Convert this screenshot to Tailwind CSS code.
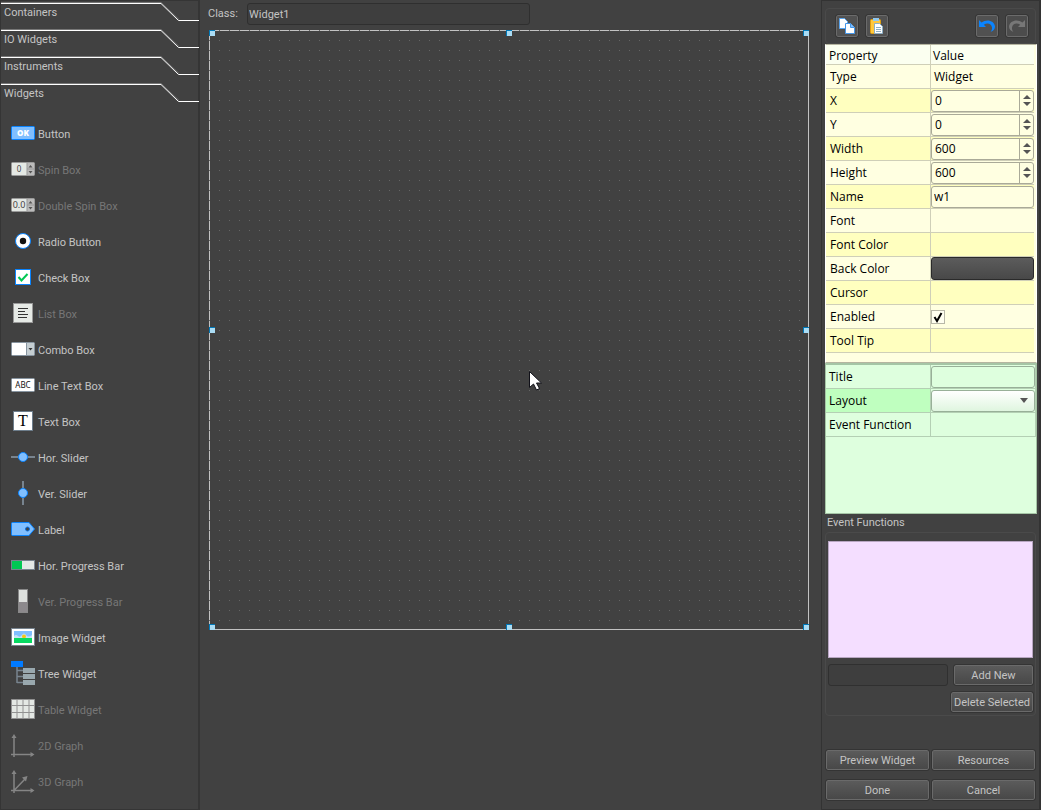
<!DOCTYPE html>
<html lang="en">
<head>
<meta charset="utf-8">
<title>Widget Designer</title>
<script src="https://cdn.jsdelivr.net/npm/@tailwindcss/browser@4"></script>
</head>
<body class="flex min-h-screen bg-[#414141] font-['Roboto',sans-serif] text-[11px] leading-4 text-[#c4c4c4]">

<aside class="w-[200px] shrink-0 border border-[#353535] border-r-2">
  <nav class="-mt-px -ml-px" aria-label="Widget groups">
    <button class="relative block h-[27px] w-full pl-1 pb-0.5 text-left"><svg class="absolute left-0 top-0" width="199" height="27" fill="none"><path d="M1 2.500H161L179 19.500" stroke="#777"/><path d="M1 3.500H161L178.500 20.500H199" stroke="#fff"/></svg>Containers</button>
    <button class="relative block h-[27px] w-full pl-1 pb-0.5 text-left"><svg class="absolute left-0 top-0" width="199" height="27" fill="none"><path d="M1 2.500H161L179 19.500" stroke="#777"/><path d="M1 3.500H161L178.500 20.500H199" stroke="#fff"/></svg>IO Widgets</button>
    <button class="relative block h-[27px] w-full pl-1 pb-0.5 text-left"><svg class="absolute left-0 top-0" width="199" height="27" fill="none"><path d="M1 2.500H161L179 19.500" stroke="#777"/><path d="M1 3.500H161L178.500 20.500H199" stroke="#fff"/></svg>Instruments</button>
    <button class="relative block h-[27px] w-full pl-1 pb-0.5 text-left"><svg class="absolute left-0 top-0" width="199" height="27" fill="none"><path d="M1 2.500H161L179 19.500" stroke="#777"/><path d="M1 3.500H161L178.500 20.500H199" stroke="#fff"/></svg>Widgets</button>
  </nav>
  <ul class="pt-[7px] pl-[10px] [&_span]:pt-1">
    <li class="flex h-9 items-center gap-[3px]"><svg width="24" height="24"><rect x=".5" y="5.500" width="23" height="13" rx="1" fill="#80bfff" stroke="#0a84ff"/><text x="12" y="15" text-anchor="middle" font-family="Open Sans" font-size="8" font-weight="800" fill="#fff">OK</text></svg><span>Button</span></li>
    <li class="flex h-9 items-center gap-[3px] text-[#777]"><svg width="24" height="24"><rect x=".5" y="5.500" width="23" height="13" rx="1" fill="#e4e8e4" stroke="#999"/><rect x="16" y="6" width="7" height="12" fill="#bbb"/><path d="M16 6v12M16 12h7" stroke="#999"/><path d="M17.500 10.500l2-2.500 2 2.500zM17.500 14l2 2.500 2-2.500z" fill="#555"/><text x="8" y="15" text-anchor="middle" font-family="Noto Sans" font-size="8" fill="#444">0</text></svg><span>Spin Box</span></li>
    <li class="flex h-9 items-center gap-[3px] text-[#777]"><svg width="24" height="24"><rect x=".5" y="5.500" width="23" height="13" rx="1" fill="#e4e8e4" stroke="#999"/><text x="8" y="15" text-anchor="middle" font-family="Noto Sans" font-size="9" fill="#444">0.0</text><rect x="16" y="6" width="7" height="12" fill="#bbb"/><path d="M16 6v12M16 12h7" stroke="#999"/><path d="M17.500 10.500l2-2.500 2 2.500zM17.500 14l2 2.500 2-2.500z" fill="#555"/></svg><span>Double Spin Box</span></li>
    <li class="flex h-9 items-center gap-[3px]"><svg width="24" height="24"><circle cx="12" cy="12" r="7.500" fill="#fff" stroke="#0a84ff"/><circle cx="12" cy="12" r="3.200" fill="#111"/></svg><span>Radio Button</span></li>
    <li class="flex h-9 items-center gap-[3px]"><svg width="24" height="24"><rect x="4.500" y="4.500" width="15" height="15" fill="#fff" stroke="#0a84ff"/><path d="M7.500 12l3 3.500 6-6.500" fill="none" stroke="#00c853" stroke-width="2"/></svg><span>Check Box</span></li>
    <li class="flex h-9 items-center gap-[3px] text-[#777]"><svg width="24" height="24"><rect x="2.500" y="2.500" width="19" height="19" fill="#e6eae6" stroke="#999"/><path d="M7 7.500h10M7 10.500h7M7 13.500h10M7 16.500h9" stroke="#333"/></svg><span>List Box</span></li>
    <li class="flex h-9 items-center gap-[3px]"><svg width="24" height="24"><rect x=".5" y="5.500" width="23" height="13" rx="1" fill="#fff" stroke="#8794a0"/><path d="M16 6h7v12h-7z" fill="#c5ced2"/><path d="M15.500 6v12" stroke="#8794a0"/><path d="M17.500 11h4l-2 2.500z" fill="#333"/></svg><span>Combo Box</span></li>
    <li class="flex h-9 items-center gap-[3px]"><svg width="24" height="24"><rect x=".5" y="5.500" width="23" height="13" rx="1" fill="#fff" stroke="#8794a0"/><text x="12" y="15" text-anchor="middle" font-family="Noto Sans" font-size="8" fill="#111">ABC</text></svg><span>Line Text Box</span></li>
    <li class="flex h-9 items-center gap-[3px]"><svg width="24" height="24"><rect x="2.500" y="2.500" width="19" height="19" fill="#fff" stroke="#6d7d8b"/><text x="12" y="17" text-anchor="middle" font-family="Liberation Serif" font-size="16" fill="#000">T</text></svg><span>Text Box</span></li>
    <li class="flex h-9 items-center gap-[3px]"><svg width="24" height="24"><path d="M0 12h24" stroke="#78848f" stroke-width="2"/><circle cx="12" cy="12" r="4.500" fill="#80bfff" stroke="#0a84ff"/></svg><span>Hor. Slider</span></li>
    <li class="flex h-9 items-center gap-[3px]"><svg width="24" height="24"><path d="M12 0v24" stroke="#78848f" stroke-width="2"/><circle cx="12" cy="12" r="4.500" fill="#80bfff" stroke="#0a84ff"/></svg><span>Ver. Slider</span></li>
    <li class="flex h-9 items-center gap-[3px]"><svg width="24" height="24"><path d="M1.500 5.500H18L23.500 12 18 18.500H1.500Q.5 18.500 .5 17.500V6.500Q.5 5.500 1.500 5.500z" fill="#80bfff" stroke="#0a84ff"/><circle cx="16.500" cy="12" r="2" fill="#414141" stroke="#0a70e0"/></svg><span>Label</span></li>
    <li class="flex h-9 items-center gap-[3px]"><svg width="24" height="24"><rect x=".5" y="7.500" width="23" height="9" fill="#e2e8e6" stroke="#78848f"/><path d="M1 8h10v8H1z" fill="#00c853"/></svg><span>Hor. Progress Bar</span></li>
    <li class="flex h-9 items-center gap-[3px] text-[#777]"><svg width="24" height="24"><rect x="7.500" y=".5" width="9" height="23" fill="#dde0dd" stroke="#888"/><path d="M8 13h8v10H8z" fill="#8c898c"/></svg><span>Ver. Progress Bar</span></li>
    <li class="flex h-9 items-center gap-[3px]"><svg width="24" height="24"><rect x=".5" y="3.500" width="23" height="17" fill="#fff" stroke="#78848f"/><path d="M3 6h18v7H3z" fill="#80bfff"/><path d="M3 11q2-2 4 0t4-1 4 0 6 0v3H3z" fill="#c5e3f4"/><circle cx="13" cy="11.500" r="2" fill="#f5c518"/><path d="M3 13h18v5H3z" fill="#08da62"/></svg><span>Image Widget</span></li>
    <li class="flex h-9 items-center gap-[3px]"><svg width="24" height="24"><path d="M0 0h12v6H0z" fill="#007aff"/><path d="M6 6v16M6 9.500h6M6 15.500h6M6 21.500h6" stroke="#78848f" stroke-width="1.500"/><path d="M12 7h12v5H12zM12 13h12v5H12zM12 19h12v5H12z" fill="#99a8ae"/></svg><span>Tree Widget</span></li>
    <li class="flex h-9 items-center gap-[3px] text-[#777]"><svg width="24" height="24"><path d="M.5 2.500h23v19H.5z" fill="#e4e8e4" stroke="#929292"/><path d="M6 2v20M12 2v20M18 2v20M0 8.500h24M0 15.500h24" stroke="#929292"/></svg><span>Table Widget</span></li>
    <li class="flex h-9 items-center gap-[3px] text-[#777]"><svg width="24" height="24" fill="#858585" stroke="#858585"><path d="M3 24V3M0 21.500h22" stroke-width="1.500"/><path d="M.5 5L3 1l2.500 4zM19.500 19l4 2.500-4 2.500z" stroke="none"/></svg><span>2D Graph</span></li>
    <li class="flex h-9 items-center gap-[3px] text-[#777]"><svg width="24" height="24" fill="#858585" stroke="#858585"><path d="M3 24V3M0 21.500h22M3 21.500L14.500 9.500" stroke-width="1.500"/><path d="M.5 5L3 1l2.500 4zM19.500 19l4 2.500-4 2.500zM11 8.500l5.500-1.500-1.500 5.500z" stroke="none"/></svg><span>3D Graph</span></li>
  </ul>
</aside>

<main class="min-w-0 flex-1 pl-2 pt-[3px]">
  <div class="flex items-center">
    <label for="cls" class="w-[39px]">Class:</label>
    <input id="cls" value="Widget1" class="h-[22px] w-[283px] rounded-[3px] border border-[#2f2f2f] bg-[#3e3e3e] px-px outline-none">
  </div>
  <div class="mt-[5px] ml-px">
    <svg class="block" width="600" height="600" shape-rendering="crispEdges">
      <defs><pattern id="dots" width="10" height="10" patternUnits="userSpaceOnUse"><rect width="1" height="1" fill="#666"/></pattern></defs>
      <path d="M0 .5H600M.5 0V600M599.500 0V600M0 599.500H600" stroke="#c2c2c2"/>
      <rect width="599" height="599" fill="url(#dots)"/>
      <g fill="#0078b8"><path d="M0 0h6v6H0zM297 0h6v6h-6zM594 0h6v6h-6zM0 297h6v6H0zM594 297h6v6h-6zM0 594h6v6H0zM297 594h6v6h-6zM594 594h6v6h-6z"/></g>
      <g fill="#aadcf4"><path d="M1 1h5v5H1zM298 1h5v5h-5zM595 1h5v5h-5zM1 298h5v5H1zM595 298h5v5h-5zM1 595h5v5H1zM298 595h5v5h-5zM595 595h5v5h-5z"/></g>
      <path d="M320.500 341.500v16l4-3.500 3 6 3-1.500-3-5.500h5z" fill="#fff" stroke="#101018" shape-rendering="auto"/>
    </svg>
  </div>
</main>

<aside class="flex w-[220px] shrink-0 flex-col border border-[#333] border-r-2 px-[3px] pt-[7px]">
  <div class="flex h-9 items-center rounded-sm border border-[#4a4a4a] pl-[10px] pr-[7px]">
    <button aria-label="Copy" class="flex size-[22px] items-center justify-center rounded-[2px] border border-[#6b6b6b] bg-[#515151] outline outline-[#363636]"><svg width="18" height="18"><path d="M1.500 1.500h5l3 3v7h-8z" fill="#fff" stroke="#5aa5ee"/><path d="M7.500 6.500h5l4 4v6h-9z" fill="#fff" stroke="#4596e8"/><path d="M12.500 6.500v4h4" fill="#80bfff" stroke="#4596e8"/></svg></button>
    <button aria-label="Paste" class="ml-2 flex size-[22px] items-center justify-center rounded-[2px] border border-[#6b6b6b] bg-[#515151] outline outline-[#363636]"><svg width="18" height="18"><rect x="2.500" y="2.500" width="10" height="14" rx="1" fill="#ffc83d" stroke="#dc9d12"/><rect x="5" y="1" width="6" height="3" fill="#90c8ef"/><path d="M6.500 6.500h5l3 3v7h-8z" fill="#fff" stroke="#8dafc5"/><path d="M8 10.500h5M8 12.500h5M8 14.500h5" stroke="#8dafc5"/></svg></button>
    <span class="flex-1"></span>
    <button aria-label="Undo" class="flex size-[22px] items-center justify-center rounded-[2px] border border-[#6b6b6b] bg-[#515151] outline outline-[#363636]"><svg width="18" height="18"><path d="M1 3v7h7L5.800 7.800C9 5.500 13.500 6.500 14 10.500c.2 1.800-.4 3.300-1.500 4.500 3-1 4.500-3 4.500-5.500C16.500 3.500 8.500 1.500 3.500 5.500z" fill="#0a84ff"/></svg></button>
    <button aria-label="Redo" disabled class="ml-2 flex size-[22px] items-center justify-center rounded-[2px] border border-[#6b6b6b] bg-[#4c4c4c] outline outline-[#363636]"><svg width="18" height="18"><path d="M17 3v7h-7l2.200-2.200C9 5.500 4.500 6.500 4 10.500c-.2 1.800.4 3.300 1.500 4.500-3-1-4.500-3-4.500-5.500C1.500 3.500 9.500 1.500 14.500 5.500z" fill="#777"/></svg></button>
  </div>

  <div class="h-[319px] w-[212px] border border-[#b5b5a0] border-l-[#fff] border-r-[#fff] bg-[#ffffe1] pr-0.5 font-['Open_Sans',sans-serif] text-xs leading-4 text-black">
    <table class="w-full table-fixed border-separate border-spacing-0 text-left [&_td]:h-6 [&_td]:border-b [&_td]:border-[#cfcfb8] [&_td]:p-0 [&_tbody_th]:border-b [&_tbody_th]:border-r [&_tbody_th]:border-[#cfcfb8] [&_tbody_th]:pl-1 [&_tbody_tr:nth-child(even)]:bg-[#ffffbf] [&_th]:font-normal">
      <thead><tr class="h-5 bg-[#fbfff0]"><th class="w-[105px] border-r border-b border-[#cfcfb8] pl-[3px] pt-0.5">Property</th><th class="border-b border-[#cfcfb8] pl-0.5 pt-0.5">Value</th></tr></thead>
      <tbody>
        <tr><th>Type</th><td><span class="pl-[3px]">Widget</span></td></tr>
        <tr><th><label for="x">X</label></th><td><div class="flex h-[22px] rounded-[3px] border border-[#aaaa98] bg-[#ffffe1]"><input id="x" value="0" class="min-w-0 flex-1 pl-[3px] outline-none"><span class="flex w-[14px] flex-col items-center justify-center gap-[3px] border-l border-[#aaaa98]"><button aria-label="Increase X"><svg class="block" width="8" height="4"><path d="M0 4h8L4 0z" fill="#555"/></svg></button><button aria-label="Decrease X"><svg class="block" width="8" height="4"><path d="M0 0h8L4 4z" fill="#555"/></svg></button></span></div></td></tr>
        <tr><th><label for="y">Y</label></th><td><div class="flex h-[22px] rounded-[3px] border border-[#aaaa98] bg-[#ffffe1]"><input id="y" value="0" class="min-w-0 flex-1 pl-[3px] outline-none"><span class="flex w-[14px] flex-col items-center justify-center gap-[3px] border-l border-[#aaaa98]"><button aria-label="Increase Y"><svg class="block" width="8" height="4"><path d="M0 4h8L4 0z" fill="#555"/></svg></button><button aria-label="Decrease Y"><svg class="block" width="8" height="4"><path d="M0 0h8L4 4z" fill="#555"/></svg></button></span></div></td></tr>
        <tr><th><label for="w">Width</label></th><td><div class="flex h-[22px] rounded-[3px] border border-[#aaaa98] bg-[#ffffe1]"><input id="w" value="600" class="min-w-0 flex-1 pl-[3px] outline-none"><span class="flex w-[14px] flex-col items-center justify-center gap-[3px] border-l border-[#aaaa98]"><button aria-label="Increase width"><svg class="block" width="8" height="4"><path d="M0 4h8L4 0z" fill="#555"/></svg></button><button aria-label="Decrease width"><svg class="block" width="8" height="4"><path d="M0 0h8L4 4z" fill="#555"/></svg></button></span></div></td></tr>
        <tr><th><label for="h">Height</label></th><td><div class="flex h-[22px] rounded-[3px] border border-[#aaaa98] bg-[#ffffe1]"><input id="h" value="600" class="min-w-0 flex-1 pl-[3px] outline-none"><span class="flex w-[14px] flex-col items-center justify-center gap-[3px] border-l border-[#aaaa98]"><button aria-label="Increase height"><svg class="block" width="8" height="4"><path d="M0 4h8L4 0z" fill="#555"/></svg></button><button aria-label="Decrease height"><svg class="block" width="8" height="4"><path d="M0 0h8L4 4z" fill="#555"/></svg></button></span></div></td></tr>
        <tr><th><label for="name">Name</label></th><td><input id="name" value="w1" class="block h-[22px] w-full rounded-[3px] border border-[#aaaa98] bg-[#ffffe1] pl-0.5 outline-none"></td></tr>
        <tr><th>Font</th><td></td></tr>
        <tr><th>Font Color</th><td></td></tr>
        <tr><th>Back Color</th><td><button aria-label="Back color" class="block h-[23px] w-full rounded-[3px] border border-[#2a2a2a] bg-linear-to-b from-[#5c5c5c] to-[#484848]"></button></td></tr>
        <tr><th>Cursor</th><td></td></tr>
        <tr><th><label for="en">Enabled</label></th><td><span class="relative block size-[14px]"><input id="en" type="checkbox" checked class="block size-[14px] appearance-none border border-[#b8b8a8] bg-[#fffff0]"><svg class="pointer-events-none absolute left-0 top-0" width="14" height="14"><path d="M3.500 7l2.500 4 4.500-8" fill="none" stroke="#000" stroke-width="2"/></svg></span></td></tr>
        <tr><th>Tool Tip</th><td></td></tr>
      </tbody>
    </table>
  </div>

  <div class="h-[151px] w-[212px] border border-t-2 border-[#a5c5a5] bg-[#deffde] font-['Open_Sans',sans-serif] text-xs leading-4 text-black">
    <table class="w-full table-fixed border-separate border-spacing-0 text-left [&_td]:h-6 [&_td]:border-b [&_td]:border-r [&_td]:border-[#b4d0b4] [&_td]:p-0 [&_th]:w-[105px] [&_th]:border-b [&_th]:border-r [&_th]:border-[#b4d0b4] [&_th]:pl-[3px] [&_th]:font-normal">
      <tbody>
        <tr><th><label for="title">Title</label></th><td><input id="title" class="block h-[22px] w-full rounded-[3px] border border-[#98b098] bg-[#deffde] outline-none"></td></tr>
        <tr><th class="bg-[#bfffbf]"><label for="layout">Layout</label></th><td><div class="relative"><select id="layout" class="block h-[22px] w-full appearance-none rounded-[3px] border border-[#98b098] bg-linear-to-b from-white to-[#dff5df]"><option></option></select><svg class="pointer-events-none absolute right-[7px] top-2" width="8" height="5"><path d="M0 0h8L4 5z" fill="#555"/></svg></div></td></tr>
        <tr><th>Event Function</th><td></td></tr>
      </tbody>
    </table>
  </div>

  <h2 class="pl-0.5 pt-px">Event Functions</h2>
  <div class="mt-px flex h-[184px] flex-col rounded-sm border border-[#4a4a4a] pl-0.5 pr-0.5 pt-2">
    <div class="h-[117px] border border-[#b8a6c2] bg-[#f4deff]"></div>
    <div class="mt-1.5 flex items-center justify-between">
      <input aria-label="New event function" class="h-[22px] w-[120px] rounded-[3px] border border-[#303030] bg-[#3e3e3e] outline-none">
      <button class="h-5 w-[79px] rounded-[2px] border border-[#6a6a6a] bg-linear-to-b from-[#5b5b5b] to-[#484848] pt-px outline outline-[#343434]">Add New</button>
    </div>
    <button class="mt-1.5 h-5 w-[82px] self-end rounded-[2px] border border-[#6a6a6a] bg-linear-to-b from-[#5b5b5b] to-[#484848] pt-px whitespace-nowrap outline outline-[#343434]">Delete Selected</button>
  </div>
  <div class="mt-[34px] mr-px ml-px grid grid-cols-2 gap-x-[3px] gap-y-2.5 pb-[9px]">
    <button class="h-5 rounded-[2px] border border-[#6a6a6a] bg-linear-to-b from-[#5b5b5b] to-[#484848] pt-px outline outline-[#343434]">Preview Widget</button>
    <button class="h-5 rounded-[2px] border border-[#6a6a6a] bg-linear-to-b from-[#5b5b5b] to-[#484848] pt-px outline outline-[#343434]">Resources</button>
    <button class="h-5 rounded-[2px] border border-[#6a6a6a] bg-linear-to-b from-[#5b5b5b] to-[#484848] pt-px outline outline-[#343434]">Done</button>
    <button class="h-5 rounded-[2px] border border-[#6a6a6a] bg-linear-to-b from-[#5b5b5b] to-[#484848] pt-px outline outline-[#343434]">Cancel</button>
  </div>
</aside>
</body>
</html>
